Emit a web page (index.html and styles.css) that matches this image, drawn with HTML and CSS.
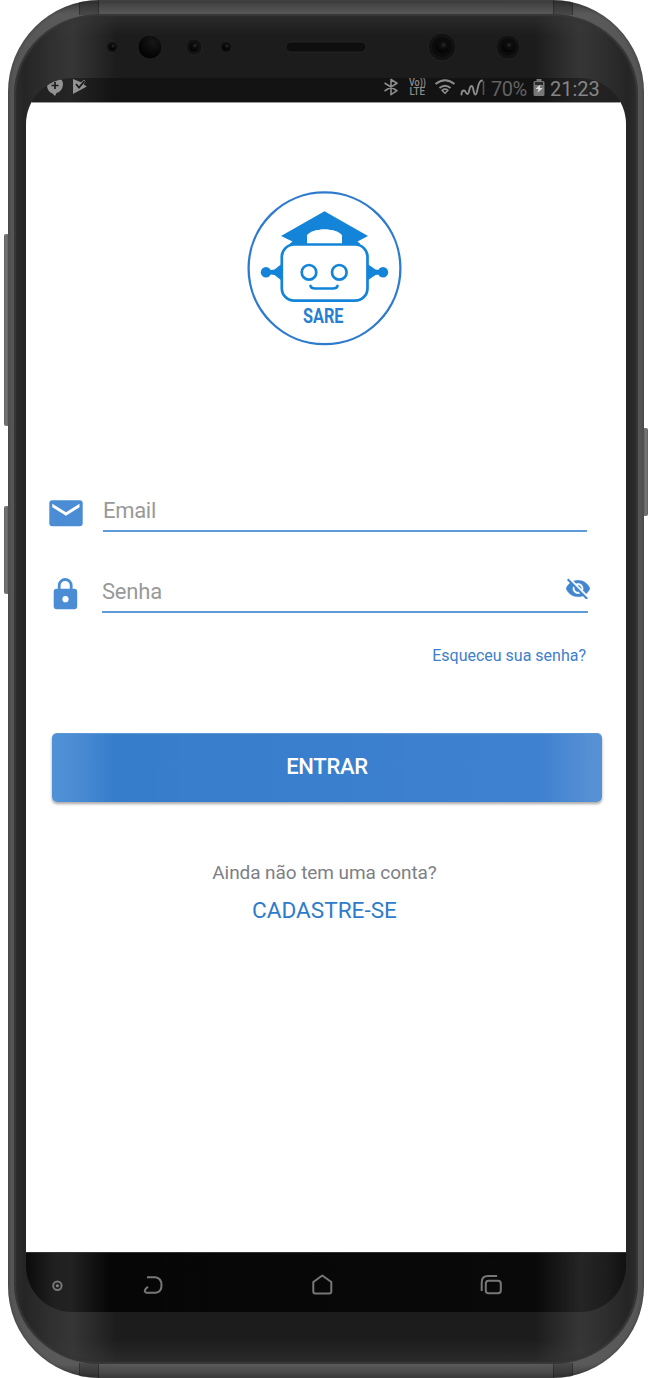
FILE: index.html
```html
<!DOCTYPE html>
<html lang="pt-BR">
<head>
<meta charset="utf-8">
<title>SARE</title>
<link rel="stylesheet" href="styles.css">
</head>
<body>
<div class="phone">
  <i class="key key-volume"></i>
  <i class="key key-assist"></i>
  <i class="key key-power"></i>
  <i class="seam seam-tl"></i><i class="seam seam-tr"></i><i class="seam seam-bl"></i><i class="seam seam-br"></i>
  <div class="face">
    <svg class="sensors" width="624" height="64" viewBox="14 14 624 64">
      <defs>
        <radialGradient id="lens" cx=".62" cy=".3" r=".6"><stop offset="0" stop-color="#171717"/><stop offset="1" stop-color="#040404"/></radialGradient>
      </defs>
      <g fill="#121212" stroke="#292929" stroke-width=".7">
        <circle cx="112.300" cy="47" r="5.800"/><circle cx="194" cy="47" r="8"/><circle cx="226" cy="47" r="6"/>
        <circle cx="442" cy="47" r="14"/><circle cx="508" cy="47" r="12"/>
        <rect x="286" y="42" width="80" height="10" rx="5" fill="#0e0e0e"/>
        <circle cx="150" cy="47" r="12" fill="url(#lens)"/>
      </g>
      <g fill="#0b0b0b"><circle cx="442" cy="47" r="10"/><circle cx="508" cy="47" r="8.500"/></g>
      <g fill="url(#lens)">
        <circle cx="112.300" cy="47" r="3.200"/><circle cx="194" cy="47" r="4.500"/><circle cx="226" cy="47" r="3.500"/>
        <circle cx="442" cy="47" r="6"/><circle cx="508" cy="47" r="5.500"/>
      </g>
      <g fill="#2a2a2a"><circle cx="113" cy="46" r="1"/><circle cx="195" cy="45.500" r="1.200"/><circle cx="227" cy="46" r="1"/><circle cx="443.500" cy="45" r="1.700" opacity=".7"/><circle cx="509" cy="45" r="1.600" opacity=".7"/></g>
    </svg>
    <div class="screen">
      <header class="status">
        <svg class="status-left" width="42" height="24" viewBox="46 78 42 24">
          <path fill="#929292" d="M47 86l6-6.500h8c2.500 2 2.500 6 1 9-1.200 2.500-3.500 4-5.500 4.500l-1.500 3-2.500-2.500c-3-1-5-3.500-5.500-7.500z"/>
          <path stroke="#1c1c1c" stroke-width="1.700" d="M55 82v7M51.500 85.500h7"/>
          <path fill="#929292" d="M73 79l8 3.300 3-2.500 1.500 1.500-2 3 3.300 2.200L73 94z"/>
          <path fill="none" stroke="#1c1c1c" stroke-width="1.800" d="M76 84l3 3.500 5.500-6.500"/>
        </svg>
        <svg class="status-icons" width="102" height="24" viewBox="384 78 102 24">
          <g fill="none" stroke="#8c8c8c" stroke-width="1.600" stroke-linejoin="round">
            <path d="M384.500 83l12.500 7.700-6 4v-15.200l6 3.800-12.500 7.700"/>
            <path stroke-width="2" d="M435.500 84q9.500-7.500 19 0M439.500 88q5.500-4.500 11 0"/>
            <path d="M442 90.300q3-2.500 6 0l-3 3z"/>
            <path stroke-width="1.900" stroke-linecap="round" d="M461.500 94.500c0-2.500.5-4 2.500-4s1.500 3.500 3.500 3.500 1.500-8 4-8 1.500 8.500 4 8.500 1.500-14 6.500-14"/>
            <path stroke="#555" d="M483.500 81v14"/>
          </g>
          <g class="volte"><text x="409" y="86" textLength="17" lengthAdjust="spacingAndGlyphs">Vo))</text><text x="409.500" y="94.800" textLength="15.500" lengthAdjust="spacingAndGlyphs">LTE</text></g>
        </svg>
        <span class="percent">70%</span>
        <svg class="battery" width="12" height="18" viewBox="0 0 12 18"><path fill="#777" d="M3.500 0h5v2H10q1.500 0 1.500 1.500v12Q11.500 17 10 17H2Q.5 17 .5 15.500v-12Q.5 2 2 2h1.500z"/><path fill="#292929" d="M2 3h8v3H2z"/><path fill="#ddd" d="M7.500 5.500L2.500 10h3l-1 3.800L9.800 9H6.700z"/></svg>
        <span class="clock">21:23</span>
      </header>

      <main class="login">
        <svg class="logo" width="156" height="156" viewBox="247 190 156 156">
          <circle cx="324.500" cy="268.300" r="75.900" fill="#fff" stroke="#2e7bcd" stroke-width="2.300"/>
          <g fill="#1384d8">
            <path d="M324.500 211.300L368 236l-10.500 5.500 3 2.500H342v-7.500c-5-9.500-30-9.500-35 0v7.500H289.500l3-2.500L281 236z"/>
            <circle cx="266" cy="272.300" r="5.200"/><circle cx="383" cy="272.300" r="5.200"/>
            <path d="M281.500 264v16.500l-7-5.500-7-1v-3.500l7-1zM367.500 264v16.500l8-5.500 7-1v-3.500l-7-1z"/>
          </g>
          <path fill="#fff" d="M307 243v-7.500c4-8 31-8 35 0v7.500z"/>
          <rect x="281.800" y="244.500" width="85.700" height="56.200" rx="12.500" fill="#fff" stroke="#1384d8" stroke-width="2.700"/>
          <g fill="none" stroke="#1384d8" stroke-width="2.700"><circle cx="309" cy="272.300" r="7.300"/><circle cx="339.300" cy="272.300" r="7.300"/><path stroke-linecap="round" d="M310.500 286c.5 2 2 2.500 4.500 2.500h18c2.500 0 4-.5 4.500-2.500"/></g>
          <text class="logo-name" x="303" y="323.300" textLength="40.500" lengthAdjust="spacingAndGlyphs">SARE</text>
        </svg>

        <form class="form">
          <div class="row row-email">
            <svg class="mail" width="34" height="27" viewBox="0 0 34 27"><rect x=".3" y=".3" width="33.400" height="26" rx="3" fill="#4b8dd5"/><path fill="#fff" d="M3.300 3.700L17 12.300l13.500-8.600v3.500L17 15.800 3.300 7.200z"/></svg>
            <label class="field"><span>Email</span></label>
          </div>
          <div class="row row-senha">
            <svg class="lock" width="25" height="32" viewBox="0 0 25 32"><path fill="none" stroke="#4b8dd5" stroke-width="2.800" d="M6.200 12V7.500a6 6 0 0 1 12 0V12"/><rect x=".7" y="10.800" width="23.500" height="20.500" rx="3" fill="#4b8dd5"/><circle cx="12.500" cy="21.200" r="3.100" fill="#fff"/></svg>
            <label class="field"><span>Senha</span>
              <svg class="eye" width="24" height="22" viewBox="1 1.500 22 20" preserveAspectRatio="none"><path fill="#4386d0" stroke="#4386d0" stroke-width=".3" d="M12 7c2.760 0 5 2.240 5 5 0 .65-.13 1.260-.36 1.830l2.920 2.920c1.510-1.260 2.700-2.890 3.430-4.750-1.730-4.390-6-7.500-11-7.500-1.400 0-2.740.25-3.980.7l2.160 2.160C10.740 7.130 11.350 7 12 7zM2 4.270l2.280 2.280.46.46C3.080 8.300 1.780 10.020 1 12c1.730 4.390 6 7.500 11 7.500 1.550 0 3.030-.3 4.380-.84l.42.42L19.730 22 21 20.730 3.270 3 2 4.270zM7.530 9.800l1.550 1.550c-.05.21-.08.43-.08.65 0 1.660 1.340 3 3 3 .22 0 .44-.03.65-.08l1.550 1.550c-.67.33-1.410.53-2.200.53-2.760 0-5-2.240-5-5 0-.79.2-1.530.53-2.200zm4.310-.78l3.150 3.150.02-.16c0-1.660-1.340-3-3-3l-.17.01z"/></svg>
            </label>
          </div>
          <a class="forgot">Esqueceu sua senha?</a>
          <button class="enter" type="button">ENTRAR</button>
        </form>
        <p class="ask">Ainda não tem uma conta?</p>
        <a class="signup">CADASTRE-SE</a>
      </main>

      <nav class="nav">
        <svg width="600" height="60" viewBox="26 1252 600 60" fill="none" stroke="#777" stroke-width="2" stroke-linejoin="round">
          <circle cx="57.400" cy="1285.700" r="4.200"/><circle cx="57.400" cy="1285.700" r="1.500" fill="#888" stroke="none"/>
          <path d="M147 1277.300h8.500q6 1 6 8t-6 7.500h-9q-3-1-.8-4l2.300-2"/>
          <path d="M313.300 1282l9-6.500 9 6.500v9.500q0 2-2 2h-14q-2 0-2-2z"/>
          <rect x="485.800" y="1280.800" width="15" height="12.500" rx="2.800"/><path d="M481.700 1291v-8.500q0-6.400 6.400-6.400h9"/>
        </svg>
      </nav>
    </div>
  </div>
</div>
</body>
</html>
```

FILE: styles.css
```css
* { box-sizing: border-box; }
body { margin: 0; background: #fff; font-family: Roboto, "Liberation Sans", sans-serif; }
.phone {
  position: relative;
  width: 636px;
  height: 1378px;
  margin-left: 8px;
  padding: 14px 6px;
  border-radius: 92px;
  background: linear-gradient(#4d4d4d 0, #3f3f3f 2px, #595959 14px, #555 90px, #555 1288px, #5a5a5a 1364px, #404040 1376px, #484848);
  box-shadow: inset 0 0 3px 1px rgba(0, 0, 0, .2);
}
.key { position: absolute; width: 5px; border-radius: 2px; background: linear-gradient(90deg, #555, #737373 1px, #737373 3px, #444); }
.key-volume { left: -4px; top: 234px; height: 192px; }
.key-assist { left: -4px; top: 506px; height: 88px; }
.key-power { right: -4px; top: 428px; height: 88px; transform: scaleX(-1); }
.seam { position: absolute; width: 20px; height: 15px; background: rgba(0, 0, 0, .2); border: solid rgba(0, 0, 0, .25); border-width: 0 1px; }
.seam-tl { left: 71px; top: 0; border-top-left-radius: 20px 3px; }
.seam-tr { right: 71px; top: 0; border-top-right-radius: 20px 3px; }
.seam-bl { left: 71px; bottom: 0; border-bottom-left-radius: 20px 3px; }
.seam-br { right: 71px; bottom: 0; border-bottom-right-radius: 20px 3px; }
.face {
  position: relative;
  display: flex;
  flex-direction: column;
  align-items: center;
  height: 1350px;
  border-radius: 86px / 80px;
  overflow: hidden;
  background:
    linear-gradient(rgba(60, 60, 60, .5), transparent 22px, transparent 1325px, rgba(60, 60, 60, .5)),
    linear-gradient(90deg, #2d2d2d, #252525 10px, #303030 38px, #363636 58px, #2c2c2c 76px, #1c1c1c 103px, #1c1c1c 521px, #2c2c2c 548px, #363636 566px, #303030 586px, #252525 614px, #2d2d2d);
  box-shadow: inset 0 0 0 2px #373737, inset 0 0 3px 2px #303030;
}
.sensors { display: block; flex: none; }
.screen { display: flex; flex-direction: column; width: 600px; height: 1234px; border-radius: 46px; overflow: hidden; }
.status {
  display: flex;
  flex: none;
  height: 24px;
  padding-left: 20px;
  background: linear-gradient(90deg, #202020, #242424 45px, #131313 88px, #131313 510px, #242424 555px, #202020);
  font-size: 20px;
  line-height: 23px;
}
.status-icons { margin-left: 296px; }
.volte { fill: #8c8c8c; font: 500 10px Roboto, sans-serif; }
.percent { margin-left: 5px; width: 42px; color: #626262; letter-spacing: -.5px; }
.battery { margin-top: 1px; }
.clock { margin-left: 5px; color: #868686; }
.login { flex: none; height: 1150px; background: #fff; border-top: 1px solid #999; display: flex; flex-direction: column; align-items: center; }
.logo { margin: 87px 3px 0 0; flex: none; }
.logo-name { fill: #287ed0; font: 700 19.500px Roboto, sans-serif; }
.form { width: 600px; padding: 147px 24px 0 23px; display: flex; flex-direction: column; }
.row { display: flex; height: 39px; }
.row-senha { margin-top: 42px; }
.mail { margin-top: 7px; }
.lock { margin: 4px 0 0 4px; }
.field { display: flex; justify-content: space-between; width: 484px; margin-left: 20px; border-bottom: 2px solid #5f9bd9; color: #999; font-size: 22px; line-height: 35px; letter-spacing: -.3px; }
.row-senha .field { width: 486px; margin-left: 24px; letter-spacing: -.2px; }
.eye { margin: 3px -2px 0 0; }
.forgot { align-self: flex-end; margin: 33px 16px 0 0; font-size: 16px; line-height: 20px; color: #4080c9; }
.enter {
  width: 550px;
  height: 69px;
  margin: 67px 0 0 3px;
  padding: 0 0 3px;
  border: 0;
  border-top: 1px solid #5d98d8;
  border-radius: 5px;
  background: linear-gradient(90deg, #5192d7, #4b8dd3 22px, #367dcc 62px, #3e81d0 488px, #558fd4 535px, #5691d5);
  box-shadow: 0 2px 3px rgba(0, 0, 0, .35);
  color: #fff;
  font: 500 22px Roboto, "Liberation Sans", sans-serif;
  letter-spacing: -.3px;
}
.ask { margin: 59px 3px 0 0; font-size: 19px; line-height: 24px; letter-spacing: -.08px; color: #7d8086; }
.signup { margin: 12px 3px 0 0; font-size: 22.600px; line-height: 28px; color: #2f7bcb; }
.nav { flex: none; height: 60px; border-top: 1px solid #333; background: linear-gradient(90deg, #0b0b0b, #202020 28px, #222 45px, #060606 84px, #090909 510px, #252525 555px, #1d1d1d 580px, #111); }
.nav svg { display: block; margin-top: -1px; }
```
